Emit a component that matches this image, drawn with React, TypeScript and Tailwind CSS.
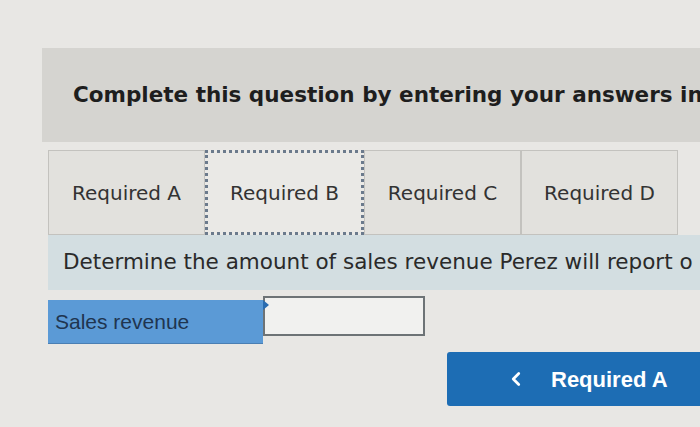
import { ChevronLeft } from 'lucide-react';

const tabs = ['Required A', 'Required B', 'Required C', 'Required D'];

export default function App() {
  return (
    <div className="w-[700px] h-[427px] overflow-hidden bg-[#e8e7e4] pt-[48px]">
      {/* Question header */}
      <div className="ml-[42px] h-[94px] bg-[#d5d4d0] flex items-center pl-[31px] overflow-hidden">
        <h1 className="whitespace-nowrap text-[21.5px] font-bold text-[#1e1e1e] font-['DejaVu_Sans',sans-serif]">
          Complete this question by entering your answers in
        </h1>
      </div>

      {/* Tabs */}
      <div className="ml-[48px] mt-[8px] flex h-[85px]">
        {tabs.map((t, i) => (
          <div
            key={t}
            className={
              i === 1
                ? 'w-[159px] flex items-center justify-center bg-[#eae9e6] border-[3px] border-dotted border-[#6b7a8c] text-[20px] text-[#333] font-["DejaVu_Sans",sans-serif]'
                : 'w-[157px] flex items-center justify-center bg-[#e2e1dd] border border-[#c3c2be] text-[20px] text-[#333] font-["DejaVu_Sans",sans-serif]'
            }
          >
            {t}
          </div>
        ))}
      </div>

      {/* Instruction band */}
      <div className="ml-[48px] h-[55px] bg-[#d3dee1] flex items-center pl-[15px] overflow-hidden">
        <p className="whitespace-nowrap text-[21.5px] text-[#2a2a2a] font-['DejaVu_Sans',sans-serif]">
          Determine the amount of sales revenue Perez will report o
        </p>
      </div>

      {/* Answer row */}
      <div className="ml-[48px] mt-[10px] flex h-[44px]">
        <div className="w-[215px] bg-[#5b9ad6] flex items-center pl-[7px] text-[21px] text-[#1f3550] font-['Liberation_Sans',sans-serif] border-b border-[#4a7fb3]">
          Sales revenue
        </div>
        <div className="relative w-[162px] h-[40px] -mt-[4px] bg-[#f1f1ef] border-2 border-[#6d7376]">
          <span className="absolute -left-[2px] top-[2px] w-0 h-0 border-y-[5px] border-y-transparent border-l-[6px] border-l-[#2a6cb0]" />
        </div>
      </div>

      {/* Navigation */}
      <div className="flex justify-end mt-[8px]">
        <button className="w-[253px] h-[54px] bg-[#1d6db4] rounded-l-[3px] flex items-center pl-[58px] gap-[24px] text-white font-bold text-[22px] font-['Liberation_Sans',sans-serif]">
          <ChevronLeft size={22} strokeWidth={3} />
          Required A
        </button>
      </div>
    </div>
  );
}
